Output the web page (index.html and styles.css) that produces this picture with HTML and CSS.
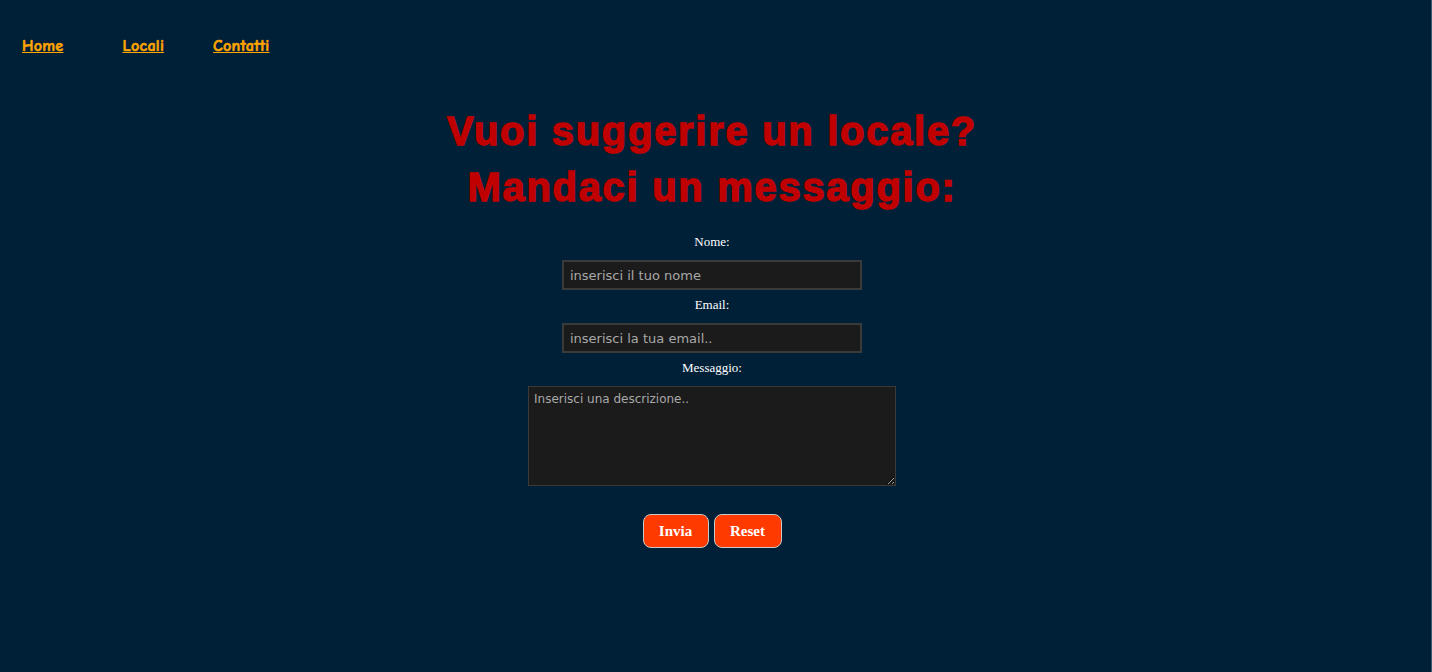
FILE: index.html
```html
<!DOCTYPE html>
<html lang="it">
<head>
<meta charset="utf-8">
<title>Contatti</title>
<link rel="stylesheet" href="styles.css">
</head>
<body>
<div class="page">
  <nav class="nav">
    <a class="nav-link nav-home" href="#">Home</a>
    <a class="nav-link nav-locali" href="#">Locali</a>
    <a class="nav-link nav-contatti" href="#">Contatti</a>
  </nav>
  <main class="main">
    <h1 class="title">Vuoi suggerire un locale?<br>Mandaci un messaggio:</h1>
    <form class="form">
      <label class="label" for="nome">Nome:</label>
      <input class="field" id="nome" type="text" placeholder="inserisci il tuo nome">
      <label class="label" for="email">Email:</label>
      <input class="field" id="email" type="text" placeholder="inserisci la tua email..">
      <label class="label" for="msg">Messaggio:</label>
      <textarea class="area" id="msg" placeholder="Inserisci una descrizione.."></textarea>
      <div class="buttons">
        <button class="btn btn-invia" type="button">Invia</button>
        <button class="btn btn-reset" type="button">Reset</button>
      </div>
    </form>
  </main>
</div>
</body>
</html>
```
FILE: styles.css
```css
html {
  background: #002038;
  height: 100%;
}
body {
  margin: 0;
  min-height: 100%;
  background: #002038;
  border-right: 1px solid #3f5a70;
  box-sizing: border-box;
}
.page {
  width: 1424px;
}
.nav {
  display: flex;
  align-items: center;
  padding: 36px 0 0 22px;
  height: 20px;
}
.nav-link {
  font-family: "Comic Sans MS", "Comic Neue", "DejaVu Sans", sans-serif;
  font-weight: bold;
  font-size: 16px;
  color: #ffa500;
  text-decoration: underline;
  letter-spacing: 0.3px;
  -webkit-text-stroke: 0.6px #ffa500;
}
.nav-locali { margin-left: 59px; }
.nav-contatti { margin-left: 49px; }

.main {
  display: flex;
  flex-direction: column;
  align-items: center;
}
.title {
  margin: 47px 0 0;
  font-family: "Arial Black", "Liberation Sans", Arial, sans-serif;
  font-weight: 900;
  font-size: 40px;
  line-height: 56px;
  color: #c00000;
  text-align: center;
  letter-spacing: 1.7px;
  -webkit-text-stroke: 1.4px #c00000;
}
.form {
  display: flex;
  flex-direction: column;
  align-items: center;
  margin-top: 18px;
}
.label {
  font-family: "Liberation Serif", "Times New Roman", serif;
  font-size: 13px;
  line-height: 18px;
  color: #ffffff;
  margin-bottom: 9px;
}
.field {
  box-sizing: border-box;
  width: 300px;
  height: 30px;
  margin: 0 0 6px;
  padding: 0 6px;
  background: #1b1b1b;
  border: 2px solid #3a3a3a;
  color: #ddd;
  font-family: "DejaVu Sans", Verdana, sans-serif;
  font-size: 13px;
  outline: none;
}
.field::placeholder, .area::placeholder {
  color: #a8a8a8;
}
.area {
  box-sizing: border-box;
  width: 368px;
  height: 100px;
  margin: 0;
  padding: 5px 5px;
  background: #1b1b1b;
  border: 1px solid #3a3a3a;
  color: #ddd;
  font-family: "DejaVu Sans", Verdana, sans-serif;
  font-size: 12px;
  resize: vertical;
}
.buttons {
  display: flex;
  gap: 5px;
  margin-top: 28px;
}
.btn {
  height: 34px;
  padding: 0;
  background: #ff3a00;
  color: #ffffff;
  border: 1px solid #c9c9c9;
  border-radius: 8px;
  font-family: "Liberation Serif", Georgia, serif;
  font-weight: bold;
  font-size: 15px;
}
.btn-invia { width: 66px; }
.btn-reset { width: 68px; }
```
